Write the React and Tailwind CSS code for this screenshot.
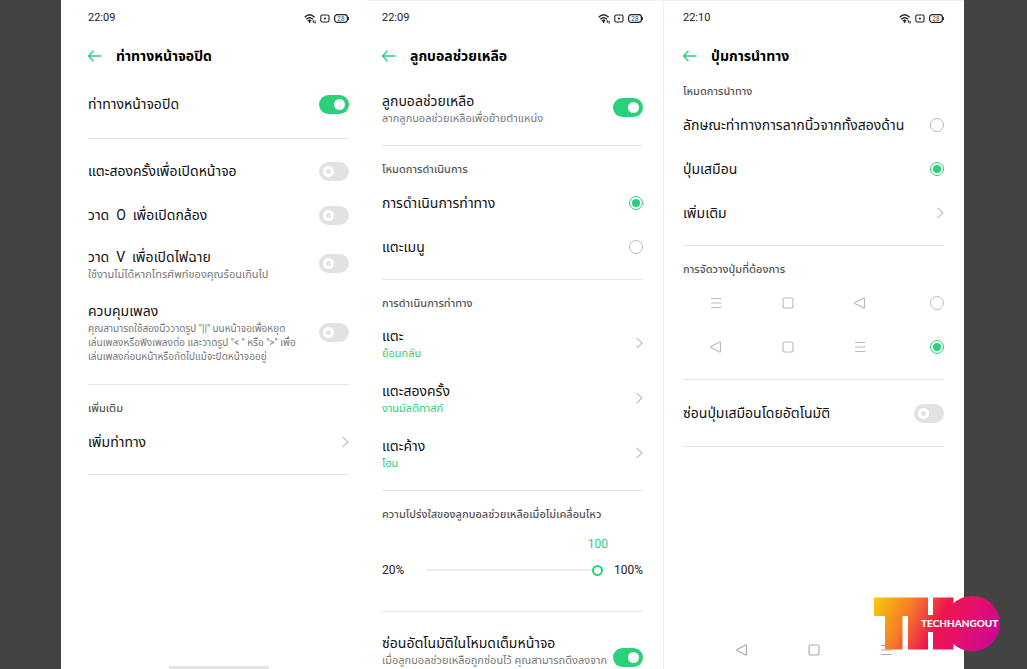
import { useId } from 'react'
import clsx from 'clsx'

function StatusIcons() {
  return (
    <div className="flex items-center gap-1 text-[#222]">
      <svg width="12" height="11" viewBox="0 0 12 11" fill="none" stroke="currentColor" strokeWidth="1.4">
        <path d="M0.7 4.2Q5.5 -0.6 10.6 4.2" />
        <path d="M2.3 6.2Q5.6 3.1 9 6.2" />
        <path d="M3.9 8Q5.6 6.5 7.2 8" />
        <path d="M5.6 8v2" />
        <path d="M9.3 7.2v2.6M11.1 7.8v2.6" strokeWidth="1.1" />
      </svg>
      <svg width="10" height="9" viewBox="0 0 10 9" fill="none" stroke="currentColor" strokeWidth="1.1">
        <rect x="0.8" y="1" width="8.2" height="7" rx="1.4" />
        <circle cx="4.9" cy="4.5" r="1.1" fill="currentColor" stroke="none" />
      </svg>
      <svg width="15" height="9" viewBox="0 0 15 9" fill="none">
        <rect x="0.6" y="0.6" width="12.8" height="7.8" rx="2.8" stroke="currentColor" strokeWidth="1.2" />
        <path d="M14.4 3v3" stroke="currentColor" />
        <text x="7" y="6.8" textAnchor="middle" fontSize="6.5" fill="#444" fontFamily="Roboto, sans-serif">
          28
        </text>
      </svg>
    </div>
  )
}

function Screen({ time, title, className, children }) {
  return (
    <section className={clsx('flex flex-col min-w-0 overflow-hidden', className)}>
      <div className="flex items-center justify-between h-9 shrink-0 text-[11px] text-[#222]">
        <span>{time}</span>
        <StatusIcons />
      </div>
      <header className="flex items-center gap-3.5 h-10 shrink-0">
        <button type="button" aria-label="ย้อนกลับ" className="text-[#2bd07b]">
          <svg width="14" height="12" viewBox="0 0 14 12" fill="none" stroke="currentColor" strokeWidth="1.3">
            <path d="M13.5 6H0.5M5.5 0.8L0.5 6l5 5.2" />
          </svg>
        </button>
        <h1 className="text-[14px] font-bold text-black whitespace-nowrap">{title}</h1>
      </header>
      {children}
    </section>
  )
}

function Divider() {
  return <hr className="my-2.5 h-px shrink-0 border-0 bg-[#e6e6e6]" />
}

function Label({ children, className }) {
  return (
    <h2 className={clsx('flex items-center h-[25px] pt-1 shrink-0 text-[11px] font-medium text-[#555] whitespace-nowrap', className)}>
      {children}
    </h2>
  )
}

function RowText({ title, sub, green }) {
  return (
    <span className="flex flex-col min-w-0 text-left">
      <span className="text-[14px] leading-[22px] text-[#111] whitespace-pre">{title}</span>
      {sub && (
        <span
          className={clsx(
            'leading-[14px] whitespace-pre',
            sub.includes('\n') ? 'text-[10px]' : 'text-[11px]',
            green ? 'text-[#2bd07b]' : 'text-[#777]'
          )}
        >
          {sub}
        </span>
      )}
    </span>
  )
}

function ToggleRow({ title, sub, on, className = 'h-11' }) {
  return (
    <label className={clsx('flex items-center justify-between shrink-0', className)}>
      <RowText title={title} sub={sub} />
      <input
        type="checkbox"
        role="switch"
        defaultChecked={on}
        className="appearance-none flex items-center shrink-0 w-[30px] h-[19px] rounded-full bg-[#e2e2e2] px-1 before:size-[11px] before:rounded-full before:border-3 before:border-white checked:justify-end checked:bg-[#2bd07b] checked:before:bg-white"
      />
    </label>
  )
}

function Radio(props) {
  return (
    <input
      type="radio"
      className="appearance-none flex items-center justify-center shrink-0 size-3.5 rounded-full border border-[#bbb] before:size-2 before:rounded-full checked:border-[#2bd07b] checked:before:bg-[#2bd07b]"
      {...props}
    />
  )
}

function RadioRow({ title, name, on }) {
  return (
    <label className="flex items-center justify-between h-11 shrink-0">
      <RowText title={title} />
      <Radio name={name} defaultChecked={on} />
    </label>
  )
}

function LinkRow({ title, sub, className = 'h-11' }) {
  return (
    <button type="button" className={clsx('flex items-center justify-between shrink-0', className)}>
      <RowText title={title} sub={sub} green />
      <svg width="8" height="12" viewBox="0 0 8 12" fill="none" stroke="#bbb" strokeWidth="1.1">
        <path d="M1.5 0.8L7 6l-5.5 5.2" />
      </svg>
    </button>
  )
}

const KEY_PATHS = {
  menu: 'M3 3.5h10.5M3 8h10.5M3 12.5h10.5',
  home: 'M5 3h6a2 2 0 0 1 2 2v6a2 2 0 0 1-2 2H5a2 2 0 0 1-2-2V5a2 2 0 0 1 2-2z',
  back: 'M12.5 3.4v9.2a.5.5 0 0 1-.8.4L3 8.5a.6.6 0 0 1 0-1L11.7 3a.5.5 0 0 1 .8.4z',
}

function Key({ name }) {
  return (
    <svg width="16" height="16" viewBox="0 0 16 16" fill="none" stroke="currentColor" strokeWidth="1.1">
      <path d={KEY_PATHS[name]} />
    </svg>
  )
}

function KeysRow({ keys, label, on }) {
  return (
    <label className="flex items-center justify-between h-11 shrink-0 text-[#bbb]">
      <span className="flex gap-14 pl-[25px]">
        {keys.map((k) => (
          <Key key={k} name={k} />
        ))}
      </span>
      <Radio name="key-order" aria-label={label} defaultChecked={on} />
    </label>
  )
}

function OpacitySlider() {
  const id = useId()
  return (
    <div className="h-[75px] shrink-0 text-[12px] text-[#222]">
      <div className="flex items-center justify-end h-9 pr-[35px]">
        <output htmlFor={id} className="text-[#2bd07b]">100</output>
      </div>
      <div className="flex items-center h-4">
        <span>20%</span>
        <input
          id={id}
          type="range"
          min="20"
          max="100"
          defaultValue="100"
          aria-label="ความโปร่งใส"
          className="appearance-none flex-1 min-w-0 ml-[22px] mr-[11px] h-0.5 bg-[#ececec] [&::-webkit-slider-thumb]:appearance-none [&::-webkit-slider-thumb]:size-[11px] [&::-webkit-slider-thumb]:rounded-full [&::-webkit-slider-thumb]:border-2 [&::-webkit-slider-thumb]:border-[#2bd07b] [&::-webkit-slider-thumb]:bg-white"
        />
        <span>100%</span>
      </div>
    </div>
  )
}

function Logo() {
  return (
    <div className="absolute right-[27px] bottom-[17px] w-[126px] h-14">
      <svg width="126" height="56" viewBox="0 0 126 56">
        <defs>
          <linearGradient id="tho" gradientUnits="userSpaceOnUse" x1="4" y1="0" x2="116" y2="56">
            <stop offset="0" stopColor="#f9c60c" />
            <stop offset="0.28" stopColor="#f4792a" />
            <stop offset="0.52" stopColor="#ed174d" />
            <stop offset="0.75" stopColor="#e40f6e" />
            <stop offset="1" stopColor="#cb0894" />
          </linearGradient>
        </defs>
        <g fill="url(#tho)">
          <path d="M0 1.5H54V19H59V1.5H79.5V53.5H59V36H54V53.5H34V20H28.5V53.5H11V20H0z" />
          <circle cx="98.3" cy="27.7" r="27.7" />
        </g>
        <text x="47" y="31" fontSize="10" fontWeight="900" fill="#fff" fontFamily="Lato, sans-serif">
          TECHHANGOUT
        </text>
      </svg>
    </div>
  )
}

export default function App() {
  return (
    <div className="relative h-screen overflow-hidden bg-[#434343] pl-[61px] pr-[63px] font-[Roboto,'Noto_Sans_Thai','Noto_Sans',sans-serif]">
      <main className="grid grid-cols-[306fr_296fr_301fr] h-full bg-white">
        <Screen time="22:09" title="ท่าทางหน้าจอปิด" className="pl-[27px] pr-[18px]">
          <ToggleRow title="ท่าทางหน้าจอปิด" on className="mt-1 h-12" />
          <Divider />
          <ToggleRow title="แตะสองครั้งเพื่อเปิดหน้าจอ" />
          <ToggleRow title="วาด  O  เพื่อเปิดกล้อง" />
          <ToggleRow
            title="วาด  V  เพื่อเปิดไฟฉาย"
            sub="ใช้งานไม่ได้หากโทรศัพท์ของคุณร้อนเกินไป"
            className="h-[53px]"
          />
          <ToggleRow
            title="ควบคุมเพลง"
            sub={
              'คุณสามารถใช้สองนิ้ววาดรูป "||" บนหน้าจอเพื่อหยุด\nเล่นเพลงหรือฟังเพลงต่อ และวาดรูป "< " หรือ ">" เพื่อ\nเล่นเพลงก่อนหน้าหรือถัดไปแม้จะปิดหน้าจออยู่'
            }
            className="h-[84px]"
          />
          <Divider />
          <Label>เพิ่มเติม</Label>
          <LinkRow title="เพิ่มท่าทาง" />
          <Divider />
          <div className="mt-auto mx-auto w-[100px] h-[3px] shrink-0 bg-[#e4e4e4]" />
        </Screen>

        <Screen time="22:09" title="ลูกบอลช่วยเหลือ" className="pl-[15px] pr-5 shadow-[inset_0_1px_#f0f0f0]">
          <ToggleRow
            title="ลูกบอลช่วยเหลือ"
            sub="ลากลูกบอลช่วยเหลือเพื่อย้ายตำแหน่ง"
            on
            className="mt-1 h-[55px]"
          />
          <Divider />
          <Label>โหมดการดำเนินการ</Label>
          <RadioRow name="mode" title="การดำเนินการท่าทาง" on />
          <RadioRow name="mode" title="แตะเมนู" />
          <Divider />
          <Label>การดำเนินการท่าทาง</Label>
          <LinkRow title="แตะ" sub="ย้อนกลับ" className="h-[55px]" />
          <LinkRow title="แตะสองครั้ง" sub="งานมัลติทาสก์" className="h-[55px]" />
          <LinkRow title="แตะค้าง" sub="โฮม" className="h-[55px]" />
          <Divider />
          <Label>ความโปร่งใสของลูกบอลช่วยเหลือเมื่อไม่เคลื่อนไหว</Label>
          <OpacitySlider />
          <Divider />
          <ToggleRow
            title="ซ่อนอัตโนมัติในโหมดเต็มหน้าจอ"
            sub="เมื่อลูกบอลช่วยเหลือถูกซ่อนไว้ คุณสามารถดึงลงจาก"
            on
            className="h-[70px] [&>span]:pb-3.5"
          />
        </Screen>

        <Screen time="22:10" title="ปุ่มการนำทาง" className="pl-[19px] pr-5 border-l border-[#f0f0f0] shadow-[inset_0_1px_#f0f0f0]">
          <Label className="mt-0.5">โหมดการนำทาง</Label>
          <RadioRow name="nav" title="ลักษณะท่าทางการลากนิ้วจากทั้งสองด้าน" />
          <RadioRow name="nav" title="ปุ่มเสมือน" on />
          <LinkRow title="เพิ่มเติม" />
          <Divider />
          <Label>การจัดวางปุ่มที่ต้องการ</Label>
          <KeysRow keys={['menu', 'home', 'back']} label="เมนู โฮม ย้อนกลับ" />
          <KeysRow keys={['back', 'home', 'menu']} label="ย้อนกลับ โฮม เมนู" on />
          <Divider />
          <ToggleRow title="ซ่อนปุ่มเสมือนโดยอัตโนมัติ" className="h-[46px]" />
          <Divider />
          <nav className="mt-auto flex items-center justify-center gap-14 h-[38px] shrink-0 text-[#aaa]">
            <button type="button" aria-label="ย้อนกลับ"><Key name="back" /></button>
            <button type="button" aria-label="โฮม"><Key name="home" /></button>
            <button type="button" aria-label="เมนู"><Key name="menu" /></button>
          </nav>
        </Screen>
      </main>
      <Logo />
    </div>
  )
}
